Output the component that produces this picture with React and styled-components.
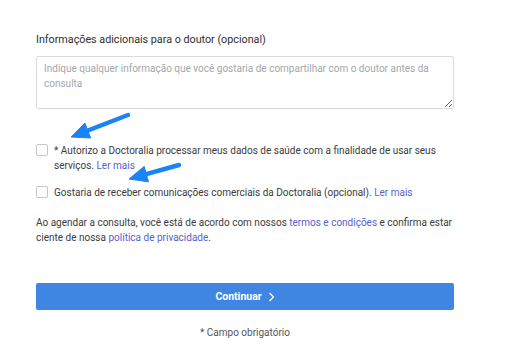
import styled, { createGlobalStyle } from "styled-components";

const Global = createGlobalStyle`
  body {
    margin: 0;
    background: #fff;
    font-family: Roboto, "Noto Sans", sans-serif;
    color: #3b3b3b;
  }
`;

const Page = styled.div`
  position: relative;
  width: 514px;
  height: 359px;
  overflow: hidden;
`;

const Form = styled.form`
  display: flex;
  flex-direction: column;
  width: 418px;
  padding: 32px 0 0 36px;
`;

const Label = styled.label`
  font-size: 10.75px;
  line-height: 16px;
  color: #2f2f2f;
  margin-bottom: 8px;
`;

const TextArea = styled.textarea`
  box-sizing: border-box;
  width: 418px;
  height: 53px;
  border: 1px solid #d9dbde;
  border-radius: 2px;
  padding: 4px 7px;
  font-family: inherit;
  font-size: 10px;
  line-height: 15px;
  color: #333;
  margin: 0 0 34px;

  &::placeholder {
    color: #a3a7ab;
  }
`;

const Check = styled.label`
  display: flex;
  align-items: flex-start;
  gap: 6px;
  font-size: 10px;
  line-height: 15px;
  margin-bottom: ${(p) => p.$gap || 0}px;
`;

const Box = styled.span`
  flex: none;
  box-sizing: border-box;
  width: 12px;
  height: 12px;
  margin-top: 1px;
  border: 1px solid #c4c7cb;
  border-radius: 2px;
  background: #fff;
`;

const Link = styled.a`
  color: #5760cc;
  text-decoration: none;
`;

const Note = styled.p`
  margin: 0 0 38px;
  font-size: 10px;
  line-height: 15px;
`;

const Button = styled.button`
  display: flex;
  align-items: center;
  justify-content: center;
  gap: 6px;
  width: 418px;
  height: 27px;
  border: none;
  border-radius: 2px;
  background: #3e86e1;
  color: #fff;
  font-family: inherit;
  font-size: 10.5px;
  font-weight: 700;
`;

const Required = styled.div`
  margin-top: 17px;
  text-align: center;
  font-size: 10px;
  color: #555;
`;

const Arrows = styled.svg`
  position: absolute;
  left: 0;
  top: 0;
  pointer-events: none;
`;

function Arrow({ from, to }) {
  const [x1, y1] = from;
  const [x2, y2] = to;
  const dx = x2 - x1;
  const dy = y2 - y1;
  const len = Math.hypot(dx, dy);
  const ux = dx / len;
  const uy = dy / len;
  const bx = x2 - ux * 18;
  const by = y2 - uy * 18;
  const px = -uy * 8;
  const py = ux * 8;
  return (
    <g fill="#1a83f5" stroke="#1a83f5">
      <line x1={x1} y1={y1} x2={bx + ux * 2} y2={by + uy * 2} strokeWidth="4.5" strokeLinecap="round" />
      <polygon points={`${x2},${y2} ${bx + px},${by + py} ${bx - px},${by - py}`} strokeWidth="1" strokeLinejoin="round" />
    </g>
  );
}

export default function App() {
  return (
    <Page>
      <Global />
      <Form>
        <Label>Informações adicionais para o doutor (opcional)</Label>
        <TextArea placeholder="Indique qualquer informação que você gostaria de compartilhar com o doutor antes da consulta" />
        <Check $gap={12}>
          <Box />
          <span>
            * Autorizo a Doctoralia processar meus dados de saúde com a finalidade de usar seus serviços. <Link>Ler mais</Link>
          </span>
        </Check>
        <Check $gap={15}>
          <Box />
          <span>
            Gostaria de receber comunicações comerciais da Doctoralia (opcional). <Link>Ler mais</Link>
          </span>
        </Check>
        <Note>
          Ao agendar a consulta, você está de acordo com nossos <Link>termos e condições</Link> e confirma estar ciente de nossa <Link>política de privacidade</Link>.
        </Note>
        <Button type="button">
          Continuar
          <svg width="7" height="10" viewBox="0 0 7 10" fill="none" stroke="#fff" strokeWidth="1.3">
            <path d="M1.5 1l4 4-4 4" />
          </svg>
        </Button>
        <Required>* Campo obrigatório</Required>
      </Form>
      <Arrows width="514" height="359">
        <Arrow from={[128, 115]} to={[71, 137]} />
        <Arrow from={[179, 165]} to={[129, 179]} />
      </Arrows>
    </Page>
  );
}
